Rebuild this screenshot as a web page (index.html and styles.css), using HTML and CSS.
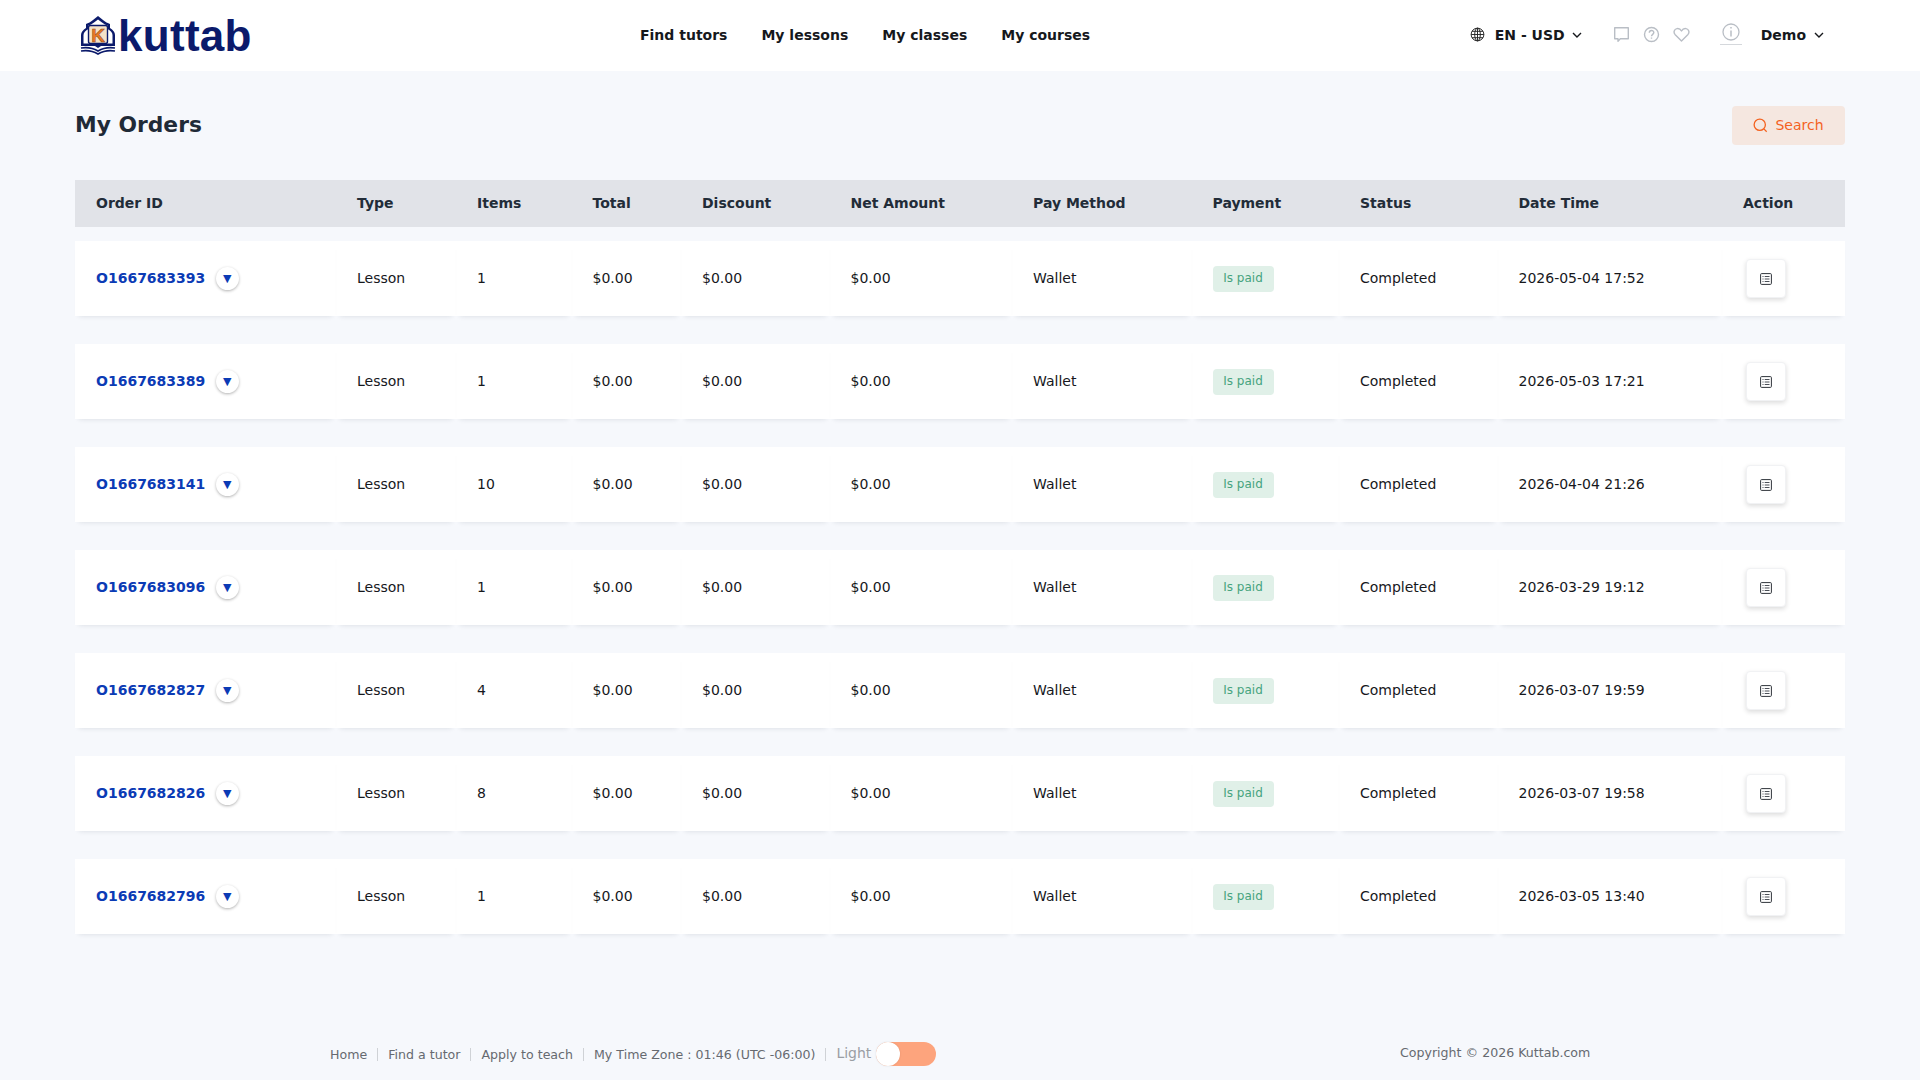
FILE: index.html
```html
<!DOCTYPE html>
<html lang="en">
  <head>
    <meta charset="UTF-8" />
    <meta name="viewport" content="width=device-width, initial-scale=1.0" />
    <title>My Orders</title>
    <link rel="stylesheet" href="styles.css">
  </head>
  <body>
    <!-- top bar -->
    <header class="top-bar">
      <a class="logo" href="#">
        <svg class="logo-mark" viewBox="0 0 36 40" width="36" height="40">
          <path d="M18 1 L23 5 C25 7 28 8 30 9 L30 13 C33 15 35 17 35 20 L35 31 L21 31 L18 33 L15 31 L1 31 L1 20 C1 17 3 15 6 13 L6 9 C8 8 11 7 13 5 Z" fill="#0b1a6b" />
          <path d="M18 4.500 L22 7.500 C24 9 26 10 27.500 10.500 L27.500 14 C30.500 15.500 32.500 17.500 32.500 20 L32.500 28.500 L3.500 28.500 L3.500 20 C3.500 17.500 5.500 15.500 8.500 14 L8.500 10.500 C10 10 12 9 14 7.500 Z" fill="#fff" />
          <rect x="8.500" y="10.500" width="19" height="18" rx="2" fill="#f5e2c8" stroke="#0b1a6b" stroke-width="1.400" />
          <text x="18" y="26.500" text-anchor="middle" class="logo-k">K</text>
          <path d="M1 33 C7 32 13 33 18 36 C23 33 29 32 35 33" fill="none" stroke="#0b1a6b" stroke-width="1.600" />
          <path d="M1 36 C7 35 13 36 18 39 C23 36 29 35 35 36" fill="none" stroke="#0b1a6b" stroke-width="1.600" />
        </svg>
        <span class="logo-text">kuttab</span>
      </a>

      <nav class="main-nav">
        <a href="#">Find tutors</a>
        <a href="#">My lessons</a>
        <a href="#">My classes</a>
        <a href="#">My courses</a>
      </nav>

      <div class="top-right">
        <div class="lang-pick">
          <svg viewBox="0 0 16 16" width="15" height="15" fill="none" stroke="#222" stroke-width="1">
            <circle cx="8" cy="8" r="6.800" />
            <ellipse cx="8" cy="8" rx="3" ry="6.800" />
            <path d="M1.200 8h13.600M2.200 4.600h11.600M2.200 11.400h11.600M8 1.200v13.600" />
          </svg>
          <span>EN - USD</span>
          <svg class="chev" viewBox="0 0 10 6" width="10" height="6"><path d="M1 1l4 4 4-4" /></svg>
        </div>
        <div class="tool-icons">
          <svg viewBox="0 0 17 17" width="17" height="17" fill="none" stroke="#b9bec5" stroke-width="1.400">
            <path d="M1.700 1.700h13.600v11h-8l-2.300 2.500v-2.500H1.700z" stroke-linejoin="round" />
          </svg>
          <svg viewBox="0 0 17 17" width="17" height="17" fill="none" stroke="#b9bec5" stroke-width="1.400">
            <circle cx="8.500" cy="8.500" r="7" />
            <path d="M6.300 6.800c0-3 4.500-3 4.500-.2 0 1.700-2.300 1.800-2.300 3.600" />
            <path d="M8.500 11.500v1.200" />
          </svg>
          <svg viewBox="0 0 17 17" width="17" height="17" fill="none" stroke="#b9bec5" stroke-width="1.400">
            <path d="M8.500 15L2 8.400C.3 6.500 1 3 4 2.600c2-.3 3.600.8 4.500 2.400.9-1.600 2.500-2.700 4.500-2.400 3 .4 3.700 3.900 2 5.800z" stroke-linejoin="round" />
          </svg>
        </div>
        <div class="info-mark">
          <svg viewBox="0 0 18 18" width="18" height="18" fill="none" stroke="#b9bec5" stroke-width="1.300">
            <circle cx="9" cy="9" r="8" />
            <path d="M9 7.500v6M9 4v1.600" stroke-width="1.500" />
          </svg>
          <i class="info-line"></i>
        </div>
        <div class="user-pick">
          <span>Demo</span>
          <svg class="chev" viewBox="0 0 10 6" width="10" height="6"><path d="M1 1l4 4 4-4" /></svg>
        </div>
      </div>
    </header>

    <main class="page">
      <div class="title-row">
        <h1>My Orders</h1>
        <button class="search-btn">
          <svg viewBox="0 0 16 16" width="15" height="15" fill="none" stroke="#f4621f" stroke-width="1.400">
            <circle cx="7.200" cy="7.200" r="6" />
            <path d="M11.600 11.600l3 3" />
          </svg>
          <span class="search-label">Search</span>
        </button>
      </div>

      <!-- orders table -->
      <section class="orders">
        <div class="orders-head">
          <div>Order ID</div>
          <div>Type</div>
          <div>Items</div>
          <div>Total</div>
          <div>Discount</div>
          <div>Net Amount</div>
          <div>Pay Method</div>
          <div>Payment</div>
          <div>Status</div>
          <div>Date Time</div>
          <div>Action</div>
        </div>

        <div class="order-row">
          <div class="cell"><a class="order-id" href="#">O1667683393</a><span class="expand">▼</span></div>
          <div class="cell">Lesson</div>
          <div class="cell">1</div>
          <div class="cell">$0.00</div>
          <div class="cell">$0.00</div>
          <div class="cell">$0.00</div>
          <div class="cell">Wallet</div>
          <div class="cell"><span class="paid">Is paid</span></div>
          <div class="cell">Completed</div>
          <div class="cell">2026-05-04 17:52</div>
          <div class="cell"><button class="detail-btn"><svg viewBox="0 0 12 12" width="12" height="12"><use href="#list-icon" /></svg></button></div>
        </div>

        <div class="order-row">
          <div class="cell"><a class="order-id" href="#">O1667683389</a><span class="expand">▼</span></div>
          <div class="cell">Lesson</div>
          <div class="cell">1</div>
          <div class="cell">$0.00</div>
          <div class="cell">$0.00</div>
          <div class="cell">$0.00</div>
          <div class="cell">Wallet</div>
          <div class="cell"><span class="paid">Is paid</span></div>
          <div class="cell">Completed</div>
          <div class="cell">2026-05-03 17:21</div>
          <div class="cell"><button class="detail-btn"><svg viewBox="0 0 12 12" width="12" height="12"><use href="#list-icon" /></svg></button></div>
        </div>

        <div class="order-row">
          <div class="cell"><a class="order-id" href="#">O1667683141</a><span class="expand">▼</span></div>
          <div class="cell">Lesson</div>
          <div class="cell">10</div>
          <div class="cell">$0.00</div>
          <div class="cell">$0.00</div>
          <div class="cell">$0.00</div>
          <div class="cell">Wallet</div>
          <div class="cell"><span class="paid">Is paid</span></div>
          <div class="cell">Completed</div>
          <div class="cell">2026-04-04 21:26</div>
          <div class="cell"><button class="detail-btn"><svg viewBox="0 0 12 12" width="12" height="12"><use href="#list-icon" /></svg></button></div>
        </div>

        <div class="order-row">
          <div class="cell"><a class="order-id" href="#">O1667683096</a><span class="expand">▼</span></div>
          <div class="cell">Lesson</div>
          <div class="cell">1</div>
          <div class="cell">$0.00</div>
          <div class="cell">$0.00</div>
          <div class="cell">$0.00</div>
          <div class="cell">Wallet</div>
          <div class="cell"><span class="paid">Is paid</span></div>
          <div class="cell">Completed</div>
          <div class="cell">2026-03-29 19:12</div>
          <div class="cell"><button class="detail-btn"><svg viewBox="0 0 12 12" width="12" height="12"><use href="#list-icon" /></svg></button></div>
        </div>

        <div class="order-row">
          <div class="cell"><a class="order-id" href="#">O1667682827</a><span class="expand">▼</span></div>
          <div class="cell">Lesson</div>
          <div class="cell">4</div>
          <div class="cell">$0.00</div>
          <div class="cell">$0.00</div>
          <div class="cell">$0.00</div>
          <div class="cell">Wallet</div>
          <div class="cell"><span class="paid">Is paid</span></div>
          <div class="cell">Completed</div>
          <div class="cell">2026-03-07 19:59</div>
          <div class="cell"><button class="detail-btn"><svg viewBox="0 0 12 12" width="12" height="12"><use href="#list-icon" /></svg></button></div>
        </div>

        <div class="order-row">
          <div class="cell"><a class="order-id" href="#">O1667682826</a><span class="expand">▼</span></div>
          <div class="cell">Lesson</div>
          <div class="cell">8</div>
          <div class="cell">$0.00</div>
          <div class="cell">$0.00</div>
          <div class="cell">$0.00</div>
          <div class="cell">Wallet</div>
          <div class="cell"><span class="paid">Is paid</span></div>
          <div class="cell">Completed</div>
          <div class="cell">2026-03-07 19:58</div>
          <div class="cell"><button class="detail-btn"><svg viewBox="0 0 12 12" width="12" height="12"><use href="#list-icon" /></svg></button></div>
        </div>

        <div class="order-row">
          <div class="cell"><a class="order-id" href="#">O1667682796</a><span class="expand">▼</span></div>
          <div class="cell">Lesson</div>
          <div class="cell">1</div>
          <div class="cell">$0.00</div>
          <div class="cell">$0.00</div>
          <div class="cell">$0.00</div>
          <div class="cell">Wallet</div>
          <div class="cell"><span class="paid">Is paid</span></div>
          <div class="cell">Completed</div>
          <div class="cell">2026-03-05 13:40</div>
          <div class="cell"><button class="detail-btn"><svg viewBox="0 0 12 12" width="12" height="12"><use href="#list-icon" /></svg></button></div>
        </div>
      </section>
    </main>

    <footer class="site-footer">
      <div class="footer-links">
        <a href="#">Home</a>
        <i class="sep"></i>
        <a href="#">Find a tutor</a>
        <i class="sep"></i>
        <a href="#">Apply to teach</a>
        <i class="sep"></i>
        <span>My Time Zone : 01:46 (UTC -06:00)</span>
        <i class="sep"></i>
        <span class="theme-label">Light</span>
        <span class="theme-toggle"><i class="knob"></i></span>
      </div>
      <div class="copyright">Copyright © 2026 Kuttab.com</div>
    </footer>

    <!-- shared icon for the action buttons -->
    <svg class="icon-defs" width="0" height="0">
      <symbol id="list-icon" viewBox="0 0 12 12">
        <rect x="0.600" y="0.600" width="10.800" height="10.800" rx="1" fill="none" stroke="#2f343b" stroke-width="1" />
        <path d="M2.500 3.500h1M4.700 3.500h4.800M2.500 6h1M4.700 6h4.800M2.500 8.500h1M4.700 8.500h4.800" stroke="#4a4f57" stroke-width="1" />
      </symbol>
    </svg>
  </body>
</html>
```

FILE: styles.css
```css
* {
  box-sizing: border-box;
}

body {
  margin: 0;
  padding: 0;
  height: 1080px;
  overflow: hidden;
  display: flex;
  flex-direction: column;
  background-color: #f6f8fc;
  color: #16181c;
  font-family: "DejaVu Sans", sans-serif;
  font-size: 14px;
}

a {
  color: inherit;
  text-decoration: none;
}

/* top bar */
.top-bar {
  display: flex;
  align-items: center;
  height: 71px;
  padding-left: 80px;
  padding-bottom: 2px;
  background-color: #fff;
}

.logo {
  display: flex;
  align-items: center;
  width: 560px;
}

.logo-mark {
  flex: none;
}

.logo-k {
  font-family: "Liberation Sans", sans-serif;
  font-size: 19px;
  font-weight: 700;
  fill: #ec7a25;
  stroke: #8a4a1c;
  stroke-width: 0.5px;
}

.logo-text {
  margin-top: 2px;
  margin-left: 2px;
  color: #0b1a6b;
  font-family: "Liberation Sans", sans-serif;
  font-size: 44px;
  font-weight: 700;
  line-height: 1;
  letter-spacing: 0.3px;
}

.main-nav {
  display: flex;
  gap: 34px;
  font-weight: 700;
}

.top-right {
  display: flex;
  align-items: center;
  margin-left: auto;
  padding-right: 96px;
  font-weight: 700;
}

.lang-pick,
.user-pick {
  display: flex;
  align-items: center;
}

.lang-pick span {
  margin-left: 10px;
  margin-right: 7px;
}

.user-pick span {
  margin-right: 8px;
}

.chev {
  fill: none;
  stroke: #16181c;
  stroke-width: 1.400;
}

.tool-icons {
  display: flex;
  gap: 13px;
  margin-left: 31px;
}

.info-mark {
  position: relative;
  display: flex;
  margin-left: 32px;
  margin-right: 21px;
  margin-top: -5px;
}

.info-line {
  position: absolute;
  left: -2px;
  right: -2px;
  bottom: -4px;
  height: 1px;
  background-color: #d5d8dc;
}

/* page */
.page {
  flex: 1;
  padding: 0 75px;
}

.title-row {
  display: flex;
  justify-content: space-between;
  align-items: center;
  margin-top: 35px;
  height: 39px;
}

h1 {
  margin: 0 0 2px;
  color: #1f2a37;
  font-size: 21.800px;
  font-weight: 700;
}

.search-btn {
  display: flex;
  align-items: center;
  justify-content: center;
  gap: 7px;
  width: 113px;
  height: 39px;
  padding: 0;
  border: 0;
  border-radius: 4px;
  background-color: #f5e7e0;
  color: #f4621f;
  font-family: inherit;
  font-size: 14px;
}

.search-label {
  margin-bottom: 1px;
}

/* orders table */
.orders {
  margin-top: 35px;
}

.orders-head,
.order-row {
  display: grid;
  grid-template-columns: 261px 120px 115.500px 109.500px 148.500px 182.500px 179.500px 147.500px 158.500px 224.500px 123px;
}

.orders-head {
  align-items: center;
  height: 47px;
  margin-bottom: 14px;
  padding-bottom: 2px;
  background-color: #e1e3e8;
  color: #222c38;
  font-weight: 700;
}

.orders-head div {
  padding-left: 21px;
}

.order-row {
  height: 75px;
  margin-bottom: 28px;
  background-color: #fff;
}

.cell {
  display: flex;
  align-items: center;
  padding-left: 21px;
  padding-bottom: 2px;
  box-shadow: 0 4px 5px -4px rgba(30, 40, 60, 0.14);
}

.order-id {
  color: #0b3bb5;
  font-weight: 700;
}

.expand {
  display: flex;
  align-items: center;
  justify-content: center;
  width: 23px;
  height: 23px;
  margin-top: 2px;
  margin-left: 10.500px;
  border-radius: 50%;
  background-color: #fff;
  box-shadow: 0 1px 3px rgba(0, 0, 0, 0.3);
  color: #0b3bb5;
  font-size: 11px;
}

.paid {
  display: flex;
  align-items: center;
  justify-content: center;
  width: 61px;
  height: 26px;
  margin-top: 2px;
  padding-bottom: 2px;
  border-radius: 4px;
  background-color: #e0f0e8;
  color: #46a37e;
  font-size: 12px;
}

.detail-btn {
  display: flex;
  align-items: center;
  justify-content: center;
  width: 40px;
  height: 39px;
  margin-top: 2px;
  margin-left: 3px;
  padding: 0;
  border: 1px solid #f1f2f4;
  border-radius: 4px;
  background-color: #fff;
  box-shadow: 0 2px 5px rgba(0, 0, 0, 0.14);
}

/* footer */
.site-footer {
  display: flex;
  align-items: center;
  height: 50px;
  padding-left: 330px;
  padding-bottom: 2px;
  color: #666a70;
  font-size: 12.600px;
}

.footer-links {
  display: flex;
  align-items: center;
  gap: 10px;
  width: 1070px;
}

.sep {
  width: 1px;
  height: 13px;
  background-color: #cfd2d6;
}

.theme-label {
  margin-top: -2px;
  color: #9a9ea4;
  font-size: 14px;
}

.theme-toggle {
  position: relative;
  display: block;
  width: 60px;
  height: 24px;
  margin-left: -5px;
  border-radius: 12px;
  background-color: #fda47d;
}

.knob {
  position: absolute;
  left: 0;
  top: 0;
  width: 24px;
  height: 24px;
  border-radius: 50%;
  background-color: #fff;
  box-shadow: 0 0 2px rgba(0, 0, 0, 0.12);
}

.copyright {
  margin-top: -3px;
}

.icon-defs {
  position: absolute;
}
```
